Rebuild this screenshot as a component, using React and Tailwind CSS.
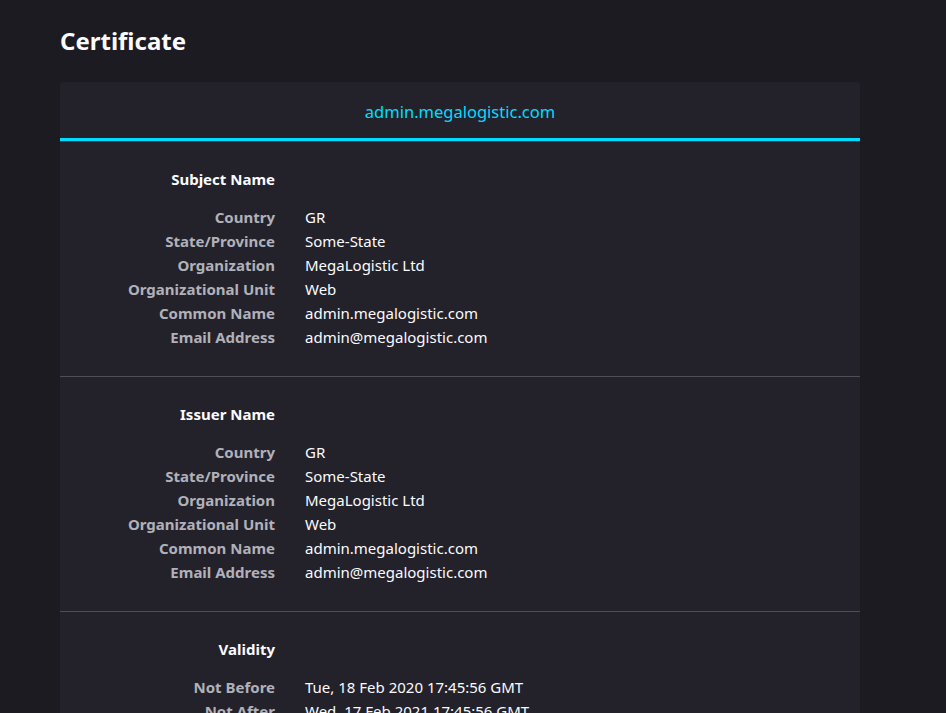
import React from 'react';

const subject = [
  ['Country', 'GR'],
  ['State/Province', 'Some-State'],
  ['Organization', 'MegaLogistic Ltd'],
  ['Organizational Unit', 'Web'],
  ['Common Name', 'admin.megalogistic.com'],
  ['Email Address', 'admin@megalogistic.com'],
];

const sections = [
  { title: 'Subject Name', rows: subject },
  { title: 'Issuer Name', rows: subject },
  {
    title: 'Validity',
    rows: [
      ['Not Before', 'Tue, 18 Feb 2020 17:45:56 GMT'],
      ['Not After', 'Wed, 17 Feb 2021 17:45:56 GMT'],
    ],
  },
];

const Section = ({ title, rows, last }) => (
  <div className={`pt-[26px] pb-[27px] ${last ? '' : 'border-b border-[#4f4e57]'}`}>
    <div className="grid grid-cols-[215px_1fr] gap-x-[30px]">
      <div className="text-right font-bold text-[#fbfbfe] leading-[22px]">{title}</div>
      <div />
    </div>
    <div className="mt-[15px] grid grid-cols-[215px_1fr] gap-x-[30px]">
      {rows.map(([label, value]) => (
        <React.Fragment key={label}>
          <div className="text-right font-bold text-[#b1b1b9] leading-[24px]">{label}</div>
          <div className="text-[#fbfbfe] leading-[24px]">{value}</div>
        </React.Fragment>
      ))}
    </div>
  </div>
);

export default function App() {
  return (
    <div
      className="min-h-screen h-[713px] overflow-hidden bg-[#1c1b22] text-[15px] text-[#fbfbfe]"
      style={{ fontFamily: '"Noto Sans", "Open Sans", sans-serif' }}
    >
      <div className="pl-[60px] w-[860px]">
        <h1 className="pt-[24px] pb-[25px] text-[24px] leading-[33px] font-bold">Certificate</h1>
        <div className="bg-[#23222b] rounded-t-[4px]">
          <div className="border-b border-[#3a3944]">
            <div className="h-[59px] flex items-center justify-center border-b-[3px] border-[#00ddff] pt-[4px]">
              <span className="text-[#00ddff] text-[16.5px] leading-[22px]">admin.megalogistic.com</span>
            </div>
          </div>
          {sections.map((s, i) => (
            <Section key={s.title} title={s.title} rows={s.rows} last={i === sections.length - 1} />
          ))}
        </div>
      </div>
    </div>
  );
}
